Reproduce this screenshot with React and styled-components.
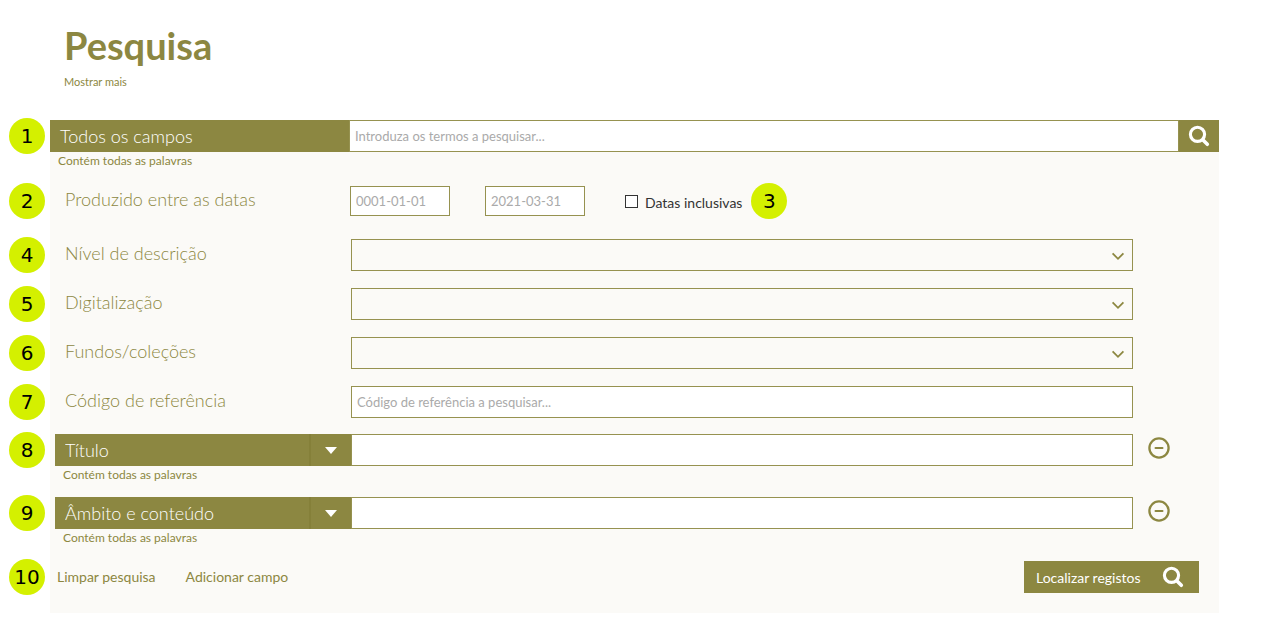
import React from "react";
import styled, { createGlobalStyle } from "styled-components";

const olive = "#8c8741";
const line = "#969250";
const cream = "#fbfaf7";

const GlobalStyle = createGlobalStyle`
  *, *::before, *::after { box-sizing: border-box; }
  body { margin: 0; background: #fff; }
  body, input, select, button { font-family: Lato, "Liberation Sans", sans-serif; }
`;

const Page = styled.main`
  padding: 22px 51px 31px 50px;
  color: ${olive};
`;

const Header = styled.header`
  display: flex;
  flex-direction: column;
  align-items: flex-start;
  padding: 0 14px;
  margin-bottom: 30px;
`;

const Title = styled.h1`
  margin: 0;
  font-size: 38px;
  line-height: 46px;
  font-weight: 700;
`;

const MoreLink = styled.a`
  margin-top: 6px;
  font-size: 11px;
  line-height: 16px;
  color: ${olive};
  text-decoration: none;
`;

const Panel = styled.form`
  display: flex;
  flex-direction: column;
  padding-bottom: 20px;
  background: ${cream};
`;

const Badge = styled.span`
  display: flex;
  align-items: center;
  justify-content: center;
  flex: none;
  width: 36px;
  height: 36px;
  border-radius: 50%;
  background: #d4f000;
  color: #000;
  font-family: "DejaVu Sans", sans-serif;
  font-size: 20px;
  line-height: 36px;
`;

const MarginBadge = styled(Badge)`
  position: absolute;
  left: -41px;
  top: 50%;
  transform: translateY(-50%);
`;

const Row = styled.div`
  position: relative;
  display: flex;
  align-items: center;
`;

const SearchRow = styled(Row)`
  height: 32px;
`;

const SearchLabel = styled.label`
  flex: none;
  width: 299px;
  padding-left: 10px;
  background: ${olive};
  color: #fff;
  font-size: 18px;
  line-height: 32px;
  font-weight: 300;
`;

const TextInput = styled.input`
  flex: 1;
  min-width: 0;
  width: 100%;
  height: 32px;
  margin: 0;
  padding: 0 5px;
  border: 1px solid ${line};
  border-radius: 0;
  background: #fff;
  color: #333;
  font-size: 13px;
  outline-offset: 0;
  &::placeholder { color: #aaa; opacity: 1; }
`;

const IconButton = styled.button`
  display: flex;
  align-items: center;
  justify-content: center;
  flex: none;
  width: 40px;
  height: 32px;
  padding: 0;
  border: 0;
  background: ${(p) => (p.$filled ? olive : "transparent")};
  color: ${(p) => (p.$filled ? "#fff" : olive)};
  cursor: pointer;
`;

const Hint = styled.div`
  padding-left: ${(p) => (p.$indent ? 13 : 8)}px;
  font-size: 12px;
  line-height: 18px;
`;

const DateRow = styled(Row)`
  height: 30px;
  margin: 16px 0 23px;
`;

const FieldLabel = styled.label`
  flex: none;
  width: ${(p) => p.$width || 301}px;
  padding: 0 0 4px 15px;
  font-size: 18px;
  line-height: 28px;
  font-weight: 300;
`;

const DateInput = styled(TextInput)`
  flex: none;
  width: 100px;
  height: 30px;
  margin-right: 35px;
`;

const CheckLabel = styled.label`
  display: flex;
  align-items: center;
  gap: 7px;
  margin: 4px 9px 0 5px;
  color: #333;
  font-size: 14px;
  line-height: 20px;
`;

const Checkbox = styled.input`
  appearance: none;
  width: 13px;
  height: 13px;
  margin: 0 0 4px;
  border: 1px solid #333;
  background: #fff;
  &:checked { background: #333; box-shadow: inset 0 0 0 2px #fff; }
`;

const Fields = styled.div`
  display: flex;
  flex-direction: column;
  gap: 17px;
  padding-right: 86px;
  margin-bottom: 16px;
`;

const SelectBox = styled.div`
  position: relative;
  flex: 1;
  svg {
    position: absolute;
    right: 8px;
    top: 11px;
    pointer-events: none;
  }
`;

const Select = styled.select`
  appearance: none;
  display: block;
  width: 100%;
  height: 32px;
  padding: 0 30px 0 5px;
  border: 1px solid ${line};
  border-radius: 0;
  background: ${cream};
  color: ${olive};
  font-size: 14px;
`;

const Criterion = styled.div`
  margin-bottom: ${(p) => (p.$last ? 14 : 13)}px;
`;

const CriterionRow = styled(Row)`
  height: 32px;
  padding: 0 40px 0 5px;
`;

const KindBox = styled.div`
  position: relative;
  flex: none;
  width: 296px;
`;

const KindSelect = styled.select`
  appearance: none;
  display: block;
  width: 100%;
  height: 32px;
  padding: 0 40px 0 10px;
  border: 0;
  border-radius: 0;
  background: ${olive};
  color: #fff;
  font-size: 18px;
  font-weight: 300;
`;

const KindArrow = styled.span`
  position: absolute;
  top: 0;
  right: 0;
  display: flex;
  align-items: center;
  justify-content: center;
  width: 42px;
  height: 32px;
  border-left: 2px solid #858039;
  pointer-events: none;
`;

const RemoveButton = styled(IconButton)`
  width: 22px;
  height: 28px;
  margin: 0 9px 4px 15px;
`;

const Footer = styled(Row)`
  gap: 30px;
  padding: 0 20px 0 7px;
`;

const TextButton = styled.button`
  padding: 0;
  border: 0;
  background: transparent;
  color: ${olive};
  font-size: 14px;
  line-height: 32px;
  cursor: pointer;
`;

const SubmitButton = styled.button`
  display: flex;
  align-items: center;
  justify-content: space-between;
  width: 175px;
  height: 32px;
  margin-left: auto;
  padding: 0 15px 0 12px;
  border: 0;
  background: ${olive};
  color: #fff;
  font-size: 14px;
  cursor: pointer;
`;

const SearchIcon = () => (
  <svg width="22" height="22" viewBox="0 0 22 22" fill="none" stroke="currentColor" aria-hidden="true">
    <circle cx="9.5" cy="9.3" r="7.1" strokeWidth="3.1" />
    <path d="M15 15l4.3 4.3" strokeWidth="3.6" strokeLinecap="round" />
  </svg>
);

const ChevronIcon = () => (
  <svg width="14" height="12" viewBox="0 0 14 12" fill="none" stroke={olive} strokeWidth="1.8" aria-hidden="true">
    <path d="M1.6 3.4L7 8.8l5.4-5.4" />
  </svg>
);

const MinusIcon = () => (
  <svg width="22" height="22" viewBox="0 0 22 22" fill="none" stroke="currentColor" strokeLinecap="round" aria-hidden="true">
    <circle cx="11" cy="11" r="9.6" strokeWidth="2.3" />
    <path d="M7.5 11h7" strokeWidth="2" />
  </svg>
);

const selects = [
  { id: "nivel", n: 4, label: "Nível de descrição" },
  { id: "digitalizacao", n: 5, label: "Digitalização" },
  { id: "fundos", n: 6, label: "Fundos/coleções" },
];

const criteria = [
  { id: "titulo", n: 8, label: "Título" },
  { id: "ambito", n: 9, label: "Âmbito e conteúdo" },
];

export default function App() {
  return (
    <>
      <GlobalStyle />
      <Page>
        <Header>
          <Title>Pesquisa</Title>
          <MoreLink href="#mais">Mostrar mais</MoreLink>
        </Header>
        <Panel onSubmit={(e) => e.preventDefault()}>
          <SearchRow>
            <MarginBadge>1</MarginBadge>
            <SearchLabel htmlFor="todos">Todos os campos</SearchLabel>
            <TextInput id="todos" placeholder="Introduza os termos a pesquisar..." />
            <IconButton $filled type="submit" aria-label="Pesquisar">
              <SearchIcon />
            </IconButton>
          </SearchRow>
          <Hint>Contém todas as palavras</Hint>

          <DateRow>
            <MarginBadge>2</MarginBadge>
            <FieldLabel htmlFor="inicio" $width={300}>Produzido entre as datas</FieldLabel>
            <DateInput id="inicio" placeholder="0001-01-01" />
            <DateInput aria-label="Data final" placeholder="2021-03-31" />
            <CheckLabel>
              <Checkbox type="checkbox" />
              Datas inclusivas
            </CheckLabel>
            <Badge>3</Badge>
          </DateRow>

          <Fields>
            {selects.map((s) => (
              <Row key={s.id}>
                <MarginBadge>{s.n}</MarginBadge>
                <FieldLabel htmlFor={s.id}>{s.label}</FieldLabel>
                <SelectBox>
                  <Select id={s.id}>
                    <option value="" />
                  </Select>
                  <ChevronIcon />
                </SelectBox>
              </Row>
            ))}
            <Row>
              <MarginBadge>7</MarginBadge>
              <FieldLabel htmlFor="codigo">Código de referência</FieldLabel>
              <TextInput id="codigo" placeholder="Código de referência a pesquisar..." />
            </Row>
          </Fields>

          {criteria.map((c, i) => (
            <Criterion key={c.id} $last={i === criteria.length - 1}>
              <CriterionRow>
                <MarginBadge>{c.n}</MarginBadge>
                <KindBox>
                  <KindSelect aria-label="Campo" defaultValue={c.id}>
                    {criteria.map((o) => (
                      <option key={o.id} value={o.id}>{o.label}</option>
                    ))}
                  </KindSelect>
                  <KindArrow>
                    <svg width="12" height="7" viewBox="0 0 12 7" fill="#fff" aria-hidden="true">
                      <path d="M0 0h12L6 7z" />
                    </svg>
                  </KindArrow>
                </KindBox>
                <TextInput aria-label={c.label} />
                <RemoveButton type="button" aria-label="Remover campo">
                  <MinusIcon />
                </RemoveButton>
              </CriterionRow>
              <Hint $indent>Contém todas as palavras</Hint>
            </Criterion>
          ))}

          <Footer>
            <MarginBadge>10</MarginBadge>
            <TextButton type="reset">Limpar pesquisa</TextButton>
            <TextButton type="button">Adicionar campo</TextButton>
            <SubmitButton type="submit">
              Localizar registos
              <SearchIcon />
            </SubmitButton>
          </Footer>
        </Panel>
      </Page>
    </>
  );
}
